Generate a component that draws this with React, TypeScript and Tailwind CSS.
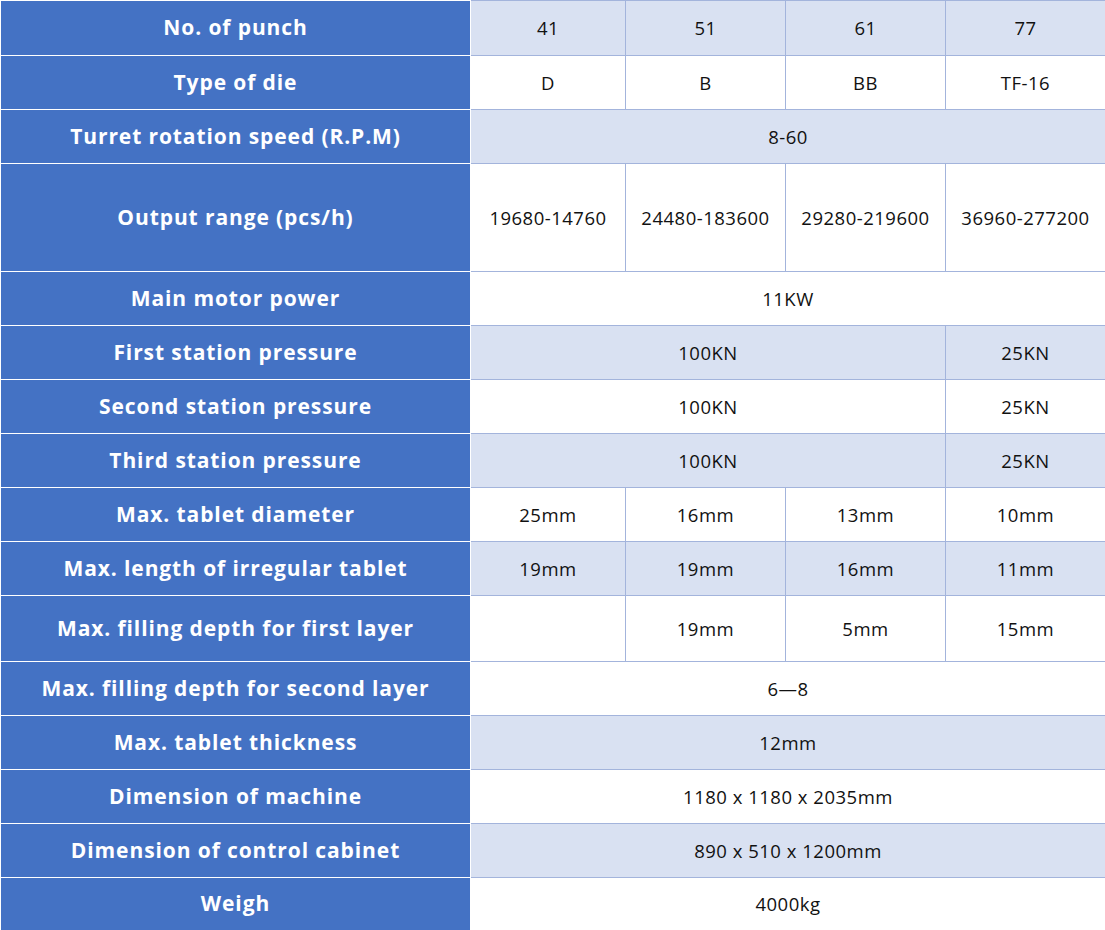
type Cell = { text: string; span?: number };
type Row = { label: string; cells: Cell[]; shade: boolean; h: string };

const rows: Row[] = [
  { label: 'No. of punch', cells: [{ text: '41' }, { text: '51' }, { text: '61' }, { text: '77' }], shade: true, h: 'h-[55px]' },
  { label: 'Type of die', cells: [{ text: 'D' }, { text: 'B' }, { text: 'BB' }, { text: 'TF-16' }], shade: false, h: 'h-[54px]' },
  { label: 'Turret rotation speed (R.P.M)', cells: [{ text: '8-60', span: 4 }], shade: true, h: 'h-[54px]' },
  { label: 'Output range (pcs/h)', cells: [{ text: '19680-14760' }, { text: '24480-183600' }, { text: '29280-219600' }, { text: '36960-277200' }], shade: false, h: 'h-[108px]' },
  { label: 'Main motor power', cells: [{ text: '11KW', span: 4 }], shade: false, h: 'h-[54px]' },
  { label: 'First station pressure', cells: [{ text: '100KN', span: 3 }, { text: '25KN' }], shade: true, h: 'h-[54px]' },
  { label: 'Second station pressure', cells: [{ text: '100KN', span: 3 }, { text: '25KN' }], shade: false, h: 'h-[54px]' },
  { label: 'Third station pressure', cells: [{ text: '100KN', span: 3 }, { text: '25KN' }], shade: true, h: 'h-[54px]' },
  { label: 'Max. tablet diameter', cells: [{ text: '25mm' }, { text: '16mm' }, { text: '13mm' }, { text: '10mm' }], shade: false, h: 'h-[54px]' },
  { label: 'Max. length of irregular tablet', cells: [{ text: '19mm' }, { text: '19mm' }, { text: '16mm' }, { text: '11mm' }], shade: true, h: 'h-[54px]' },
  { label: 'Max. filling depth for first layer', cells: [{ text: '' }, { text: '19mm' }, { text: '5mm' }, { text: '15mm' }], shade: false, h: 'h-[66px]' },
  { label: 'Max. filling depth for second layer', cells: [{ text: '6—8', span: 4 }], shade: false, h: 'h-[54px]' },
  { label: 'Max. tablet thickness', cells: [{ text: '12mm', span: 4 }], shade: true, h: 'h-[54px]' },
  { label: 'Dimension of machine', cells: [{ text: '1180 x 1180 x 2035mm', span: 4 }], shade: false, h: 'h-[54px]' },
  { label: 'Dimension of control cabinet', cells: [{ text: '890 x 510 x 1200mm', span: 4 }], shade: true, h: 'h-[54px]' },
  { label: 'Weigh', cells: [{ text: '4000kg', span: 4 }], shade: false, h: 'h-[53px]' },
];

export default function App() {
  return (
    <div className="w-[1105px] bg-white font-['Open_Sans','Noto_Sans',sans-serif]">
      <table className="w-[1105px] table-fixed border-collapse">
        <colgroup>
          <col className="w-[470px]" />
          <col className="w-[155px]" />
          <col className="w-[160px]" />
          <col className="w-[160px]" />
          <col className="w-[160px]" />
        </colgroup>
        <tbody>
          {rows.map((row) => (
            <tr key={row.label} className={row.h}>
              <th className="whitespace-nowrap border border-white bg-[#4472c4] p-0 text-center text-[21px] font-bold tracking-[0.9px] text-white">
                {row.label}
              </th>
              {row.cells.map((c, i) => (
                <td
                  key={i}
                  colSpan={c.span ?? 1}
                  className={`whitespace-nowrap border border-[#a3b4dc] p-0 text-center text-[18.5px] tracking-[0.5px] text-[#111] ${row.shade ? 'bg-[#d9e1f2]' : 'bg-white'}`}
                >
                  {c.text}
                </td>
              ))}
            </tr>
          ))}
        </tbody>
      </table>
    </div>
  );
}
